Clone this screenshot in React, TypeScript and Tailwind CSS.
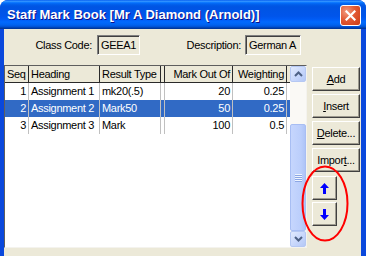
import React from "react";

const rows = [
  { seq: "1", heading: "Assignment 1", rt: "mk20(.5)", mo: "20", w: "0.25", sel: false },
  { seq: "2", heading: "Assignment 2", rt: "Mark50", mo: "50", w: "0.25", sel: true },
  { seq: "3", heading: "Assignment 3", rt: "Mark", mo: "100", w: "0.5", sel: false },
];

function Btn({ children, className = "" }: { children: React.ReactNode; className?: string }) {
  return (
    <div
      className={
        "flex items-center justify-center bg-[#ECE9D8] border border-t-white border-l-white border-r-[#404040] border-b-[#404040] shadow-[inset_-1px_-1px_#9D9A8E] text-black " +
        className
      }
    >
      {children}
    </div>
  );
}

function Chevron({ up }: { up: boolean }) {
  return (
    <svg width="9" height="6" viewBox="0 0 9 6">
      <path
        d={up ? "M1 5 L4.5 1.5 L8 5" : "M1 1 L4.5 4.5 L8 1"}
        fill="none"
        stroke="#4D6185"
        strokeWidth="2"
      />
    </svg>
  );
}

function ScrollBtn({ up }: { up: boolean }) {
  return (
    <div className="h-[16px] w-[16px] flex items-center justify-center rounded-[2px] border border-[#B5C8F3] bg-[linear-gradient(135deg,#E1EAFE_0%,#C5D5FB_60%,#B4C8F6_100%)]">
      <Chevron up={up} />
    </div>
  );
}

export default function App() {
  return (
    <div className="relative w-[366px] h-[256px] overflow-hidden bg-white font-['Liberation_Sans',Arial,sans-serif] text-[11px] tracking-[-0.3px] text-black">
      <div className="flex flex-col h-full rounded-t-[8px] bg-[#0A48DC]">
        {/* Title bar */}
        <div className="h-[29px] flex items-center pl-[7px] pr-[5px] rounded-t-[8px] bg-[linear-gradient(to_bottom,#0058ee_0%,#3593ff_4%,#288eff_6%,#127dff_8%,#036ffc_10%,#0262ee_14%,#0057e5_20%,#0054e3_24%,#0055eb_56%,#005bf5_66%,#026afe_76%,#0062ef_86%,#0052d6_92%,#0040ab_96%,#003092_100%)]">
          <span className="text-white font-bold text-[13px] tracking-normal leading-none [text-shadow:1px_1px_#0F1089]">
            Staff Mark Book [Mr A Diamond (Arnold)]
          </span>
          <div className="ml-auto mt-[1px] w-[21px] h-[21px] rounded-[3px] border border-white flex items-center justify-center bg-[radial-gradient(circle_at_30%_30%,#F29B80_0%,#E25A35_45%,#CC3A12_100%)]">
            <svg width="11" height="11" viewBox="0 0 11 11">
              <path d="M1.5 1.5 L9.5 9.5 M9.5 1.5 L1.5 9.5" stroke="white" strokeWidth="2.2" strokeLinecap="square" />
            </svg>
          </div>
        </div>

        {/* Body */}
        <div className="flex-1 ml-[4px] mr-[5px] bg-[#ECE9D8] flex flex-col">
          {/* Top fields */}
          <div className="flex items-center h-[20px] mt-[6px]">
            <div className="w-[88px] text-right">Class Code:</div>
            <div className="ml-[5px] w-[43px] h-[20px] flex items-center pl-[3px] border border-t-[#808080] border-l-[#808080] border-r-white border-b-white shadow-[inset_1px_1px_#404040]">
              GEEA1
            </div>
            <div className="w-[101px] text-right">Description:</div>
            <div className="ml-[4px] w-[56px] h-[20px] flex items-center pl-[3px] border border-t-[#808080] border-l-[#808080] border-r-white border-b-white shadow-[inset_1px_1px_#404040]">
              German A
            </div>
          </div>

          <div className="flex mt-[10px]">
            {/* Grid */}
            <div className="w-[303px] h-[183px] border border-t-[#5E5E5E] border-l-[#5E5E5E] border-r-[#F4F3EE] border-b-[#F4F3EE] flex bg-white">
              <div className="w-[285px] flex flex-col">
                {/* header */}
                <div className="flex h-[17px] bg-[#ECE9D8] leading-[16px]">
                  <div className="w-[24px] border-r border-b border-[#2A2A2A] pl-[2px]">Seq</div>
                  <div className="w-[71px] border-r border-b border-[#2A2A2A] pl-[2px]">Heading</div>
                  <div className="w-[61px] border-r border-b border-[#2A2A2A] pl-[2px]">Result Type</div>
                  <div className="w-[4px] border-r border-b border-[#2A2A2A]"></div>
                  <div className="w-[68px] border-r border-b border-[#2A2A2A] text-right pr-[2px] whitespace-nowrap overflow-hidden">Mark Out Of</div>
                  <div className="w-[54px] border-r border-b border-[#2A2A2A] text-right pr-[2px]">Weighting</div>
                  <div className="w-[3px] border-b border-[#2A2A2A]"></div>
                </div>
                {rows.map((r) => (
                  <div
                    key={r.seq}
                    className={
                      "flex h-[17px] leading-[17px] " +
                      (r.sel ? "bg-[#316AC5] text-white" : "bg-white text-black")
                    }
                  >
                    <div className="w-[24px] border-r border-[#C0C0C0] text-right pr-[2px]">{r.seq}</div>
                    <div className="w-[71px] border-r border-[#C0C0C0] pl-[2px] whitespace-nowrap">{r.heading}</div>
                    <div className="w-[61px] border-r border-[#C0C0C0] pl-[2px]">{r.rt}</div>
                    <div className="w-[4px] border-r border-[#C0C0C0]"></div>
                    <div className="w-[68px] border-r border-[#C0C0C0] text-right pr-[2px]">{r.mo}</div>
                    <div className="w-[54px] border-r border-[#C0C0C0] text-right pr-[2px]">{r.w}</div>
                    <div className="w-[3px]"></div>
                  </div>
                ))}
              </div>
              {/* scrollbar */}
              <div className="w-[16px] flex flex-col bg-[#FAF9F5]">
                <ScrollBtn up={true} />
                <div className="h-[42px]"></div>
                <div className="flex-1 rounded-[2px] border border-[#A8BEF3] bg-[linear-gradient(to_right,#C6D6FD_0%,#BBCEFB_70%,#AEC4F7_100%)] flex flex-col items-center justify-center gap-[1px]">
                  {[0, 1, 2, 3].map((i) => (
                    <div key={i} className="w-[7px] h-[1px] bg-[#EEF4FE] shadow-[0_1px_#8CA6E4]"></div>
                  ))}
                </div>
                <ScrollBtn up={false} />
              </div>
            </div>

            {/* Buttons */}
            <div className="ml-[5px] flex flex-col pt-[2px]">
              <Btn className="w-[48px] h-[24px]">
                <span><u>A</u>dd</span>
              </Btn>
              <Btn className="w-[48px] h-[24px] mt-[3px]">
                <span><u>I</u>nsert</span>
              </Btn>
              <Btn className="w-[48px] h-[24px] mt-[3px]">
                <span><u>D</u>elete...</span>
              </Btn>
              <Btn className="w-[48px] h-[24px] mt-[3px]">
                <span>Impor<u>t</u>...</span>
              </Btn>
              <Btn className="w-[25px] h-[24px] mt-[4px]">
                <svg width="9" height="11" viewBox="0 0 9 11">
                  <polygon points="4.5,0 9,5 6,5 6,11 3,11 3,5 0,5" fill="#0000FF" />
                </svg>
              </Btn>
              <Btn className="w-[25px] h-[24px] mt-[2px]">
                <svg width="9" height="11" viewBox="0 0 9 11">
                  <polygon points="3,0 6,0 6,6 9,6 4.5,11 0,6 3,6" fill="#0000FF" />
                </svg>
              </Btn>
            </div>
          </div>
        </div>
      </div>

      {/* red annotation ellipse */}
      <svg className="absolute left-[301px] top-[165px]" width="48" height="77" viewBox="0 0 48 77">
        <ellipse cx="24" cy="38.5" rx="22.5" ry="37" fill="none" stroke="#FF0000" strokeWidth="2" />
      </svg>
    </div>
  );
}
